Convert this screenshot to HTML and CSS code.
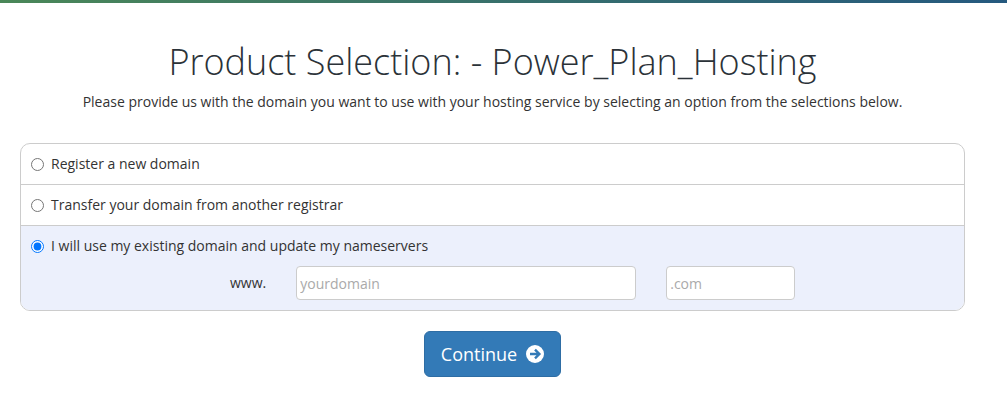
FILE: index.html
```html
<!DOCTYPE html>
<html lang="en">
<head>
    <meta charset="UTF-8">
    <meta name="viewport" content="width=device-width, initial-scale=1.0">
    <title>Product Selection</title>
    <link rel="stylesheet" href="styles.css">
</head>
<body>

<div class="top-bar"></div>

<main class="page">
    <header class="page-header">
        <h1>Product Selection: - Power_Plan_Hosting</h1>
        <p>Please provide us with the domain you want to use with your hosting service by selecting an option from the selections below.</p>
    </header>

    <form class="domain-form">
        <div class="domain-options">
            <div class="option">
                <label class="option-label"><input type="radio" name="domain"> Register a new domain</label>
            </div>
            <div class="option">
                <label class="option-label"><input type="radio" name="domain"> Transfer your domain from another registrar</label>
            </div>
            <div class="option option-active">
                <label class="option-label"><input type="radio" name="domain" checked> I will use my existing domain and update my nameservers</label>
                <div class="domain-fields">
                    <span class="www">www.</span>
                    <input class="field field-sld" type="text" placeholder="yourdomain">
                    <input class="field field-tld" type="text" placeholder=".com">
                </div>
            </div>
        </div>

        <div class="form-actions">
            <button class="btn-continue" type="button">
                Continue
                <svg class="btn-icon" viewBox="0 0 18 18" aria-hidden="true">
                    <circle cx="9" cy="9" r="9" fill="#fff"/>
                    <path d="M4 9h9M9 4.6 13.4 9 9 13.4" fill="none" stroke="#337ab7" stroke-width="2.4"/>
                </svg>
            </button>
        </div>
    </form>
</main>

</body>
</html>
```

FILE: styles.css
```css
body {
    margin: 0;
    background: #fff;
    color: #333;
    font-family: "Open Sans", Arial, sans-serif;
    font-size: 14px;
    line-height: 20px;
}
.top-bar {
    height: 3px;
    background: linear-gradient(to right, #4a8758, #25597f);
}
.page {
    padding: 0 42px 0 20px;
}
.page-header {
    text-align: center;
}
.page-header h1 {
    margin: 0;
    padding-top: 37px;
    font-family: "Open Sans", Lato, sans-serif;
    font-size: 36px;
    font-weight: 300;
    line-height: 44px;
    color: #2b3238;
}
.page-header p {
    margin: 8px 0 0;
    font-size: 14px;
}
.domain-options {
    margin-top: 31px;
    border: 1px solid #ccc;
    border-radius: 10px;
    overflow: hidden;
}
.option {
    padding: 10px;
    border-bottom: 1px solid #ccc;
}
.option:last-child {
    border-bottom: none;
}
.option-active {
    background: #ecf0fc;
}
.option-label {
    display: flex;
    align-items: center;
    gap: 7px;
    font-size: 14px;
}
.option-label input {
    width: 13px;
    height: 13px;
    margin: 0;
}
.domain-fields {
    display: flex;
    align-items: center;
    gap: 30px;
    margin: 10px 0 0 199px;
}
.field {
    box-sizing: border-box;
    height: 34px;
    padding: 0 3px;
    border: 1px solid #ccc;
    border-radius: 4px;
    font-family: "Open Sans", Arial, sans-serif;
    font-size: 14px;
    color: #555;
}
.field::placeholder {
    color: #aaa;
}
.field-sld {
    width: 340px;
}
.field-tld {
    width: 129px;
}
.form-actions {
    margin-top: 20px;
    text-align: center;
}
.btn-continue {
    display: inline-flex;
    align-items: center;
    gap: 9px;
    box-sizing: border-box;
    height: 46px;
    padding: 0 16px;
    border: 1px solid #2e6da4;
    border-radius: 6px;
    background: #337ab7;
    color: #fff;
    font-family: "Open Sans", Arial, sans-serif;
    font-size: 18px;
    cursor: pointer;
}
.btn-icon {
    width: 18px;
    height: 18px;
}
```
